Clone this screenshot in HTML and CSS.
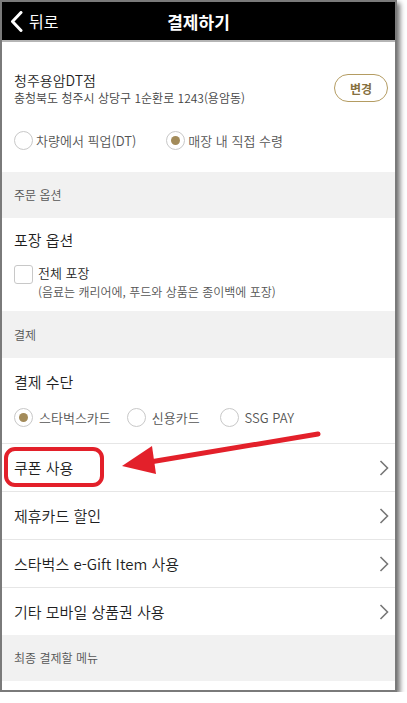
FILE: index.html
```html
<!DOCTYPE html>
<html lang="ko">
<head>
    <meta charset="UTF-8">
    <meta name="viewport" content="width=device-width, initial-scale=1.0">
    <title>결제하기</title>
    <link rel="stylesheet" href="styles.css">
</head>
<body>
<div class="phone">
    <div class="topbar">
        <a class="back" href="#">
            <svg width="13" height="21" viewBox="0 0 13 21"><polyline points="11,1.5 2.5,10.5 11,19.5" fill="none" stroke="#fff" stroke-width="3" stroke-linecap="round" stroke-linejoin="round"/></svg>
            <span>뒤로</span>
        </a>
        <h1>결제하기</h1>
    </div>

    <div class="store">
        <div class="store-row">
            <div>
                <div class="store-name">청주용암DT점</div>
                <div class="store-addr">충청북도 청주시 상당구 1순환로 1243(용암동)</div>
            </div>
            <button class="change-button">변경</button>
        </div>
        <div class="radios">
            <label class="radio first"><span class="circle"></span>차량에서 픽업(DT)</label>
            <label class="radio"><span class="circle on"></span>매장 내 직접 수령</label>
        </div>
    </div>

    <div class="section-title">주문 옵션</div>

    <div class="pack">
        <div class="heading">포장 옵션</div>
        <div class="check-row">
            <span class="box"></span>
            <div>
                <div class="check-label">전체 포장</div>
                <div class="check-sub">(음료는 캐리어에, 푸드와 상품은 종이백에 포장)</div>
            </div>
        </div>
    </div>

    <div class="section-title tall">결제</div>

    <div class="pay">
        <div class="heading">결제 수단</div>
        <div class="radios pay-radios">
            <label class="radio card"><span class="circle on"></span>스타벅스카드</label>
            <label class="radio credit"><span class="circle"></span>신용카드</label>
            <label class="radio"><span class="circle"></span>SSG PAY</label>
        </div>
    </div>

    <div class="list">
        <a class="list-row" href="#"><span>쿠폰 사용</span>
            <svg width="10" height="16" viewBox="0 0 10 16"><polyline points="1.5,1 8.5,8 1.5,15" fill="none" stroke="#777" stroke-width="1.6"/></svg></a>
        <a class="list-row" href="#"><span>제휴카드 할인</span>
            <svg width="10" height="16" viewBox="0 0 10 16"><polyline points="1.5,1 8.5,8 1.5,15" fill="none" stroke="#777" stroke-width="1.6"/></svg></a>
        <a class="list-row" href="#"><span>스타벅스 e-Gift Item 사용</span>
            <svg width="10" height="16" viewBox="0 0 10 16"><polyline points="1.5,1 8.5,8 1.5,15" fill="none" stroke="#777" stroke-width="1.6"/></svg></a>
        <a class="list-row" href="#"><span>기타 모바일 상품권 사용</span>
            <svg width="10" height="16" viewBox="0 0 10 16"><polyline points="1.5,1 8.5,8 1.5,15" fill="none" stroke="#777" stroke-width="1.6"/></svg></a>
    </div>

    <div class="section-title">최종 결제할 메뉴</div>

    <!-- red annotation drawn over the screenshot -->
    <svg class="markup" width="393" height="688" viewBox="0 0 393 688">
        <rect x="4" y="447" width="96" height="36" rx="9" fill="none" stroke="#e3202a" stroke-width="4"/>
        <line x1="316" y1="432" x2="148" y2="460" stroke="#e3202a" stroke-width="5" stroke-linecap="round"/>
        <polygon points="120,464 150,444 154,472" fill="#e3202a"/>
    </svg>
</div>
</body>
</html>
```

FILE: styles.css
```css
body {
    margin: 0;
    padding: 0;
    background-color: #ffffff;
    font-family: "Noto Sans CJK KR", "Noto Sans", sans-serif;
    font-weight: 350;
    color: #1f1f1f;
}
.phone {
    position: relative;
    width: 393px;
    height: 688px;
    border: 2px solid #7a7a7a;
    box-shadow: 3px 3px 5px rgba(0, 0, 0, 0.55);
    overflow: hidden;
    background-color: #ffffff;
}
.topbar {
    height: 38px;
    background-color: #000000;
    border-bottom: 2px solid #b5b5b5;
    display: flex;
    align-items: center;
    position: relative;
}
.back {
    display: flex;
    align-items: center;
    gap: 6px;
    padding-left: 8px;
    color: #ffffff;
    text-decoration: none;
    font-size: 16px;
    font-weight: 400;
}
.topbar h1 {
    position: absolute;
    left: 0;
    right: 0;
    margin: 0;
    text-align: center;
    color: #ffffff;
    font-size: 17px;
    font-weight: bold;
    pointer-events: none;
}
.store {
    padding: 28px 12px 22px;
}
.store-row {
    display: flex;
    justify-content: space-between;
    align-items: center;
}
.store-name {
    font-size: 14px;
    line-height: 20px;
}
.store-addr {
    font-size: 12px;
    line-height: 16px;
    color: #444;
}
.change-button {
    width: 54px;
    height: 28px;
    margin-right: -5px;
    border: 1.5px solid #b49c62;
    border-radius: 14px;
    background-color: #ffffff;
    color: #86703f;
    font-family: inherit;
    font-size: 12px;
    font-weight: bold;
}
.radios {
    display: flex;
    margin-top: 25px;
}
.radio {
    display: flex;
    align-items: center;
    gap: 3px;
    font-size: 13px;
    color: #555;
    height: 19px;
}
.radio.first {
    margin-right: 30px;
}
.circle {
    width: 17px;
    height: 17px;
    border: 1px solid #c8c8c8;
    border-radius: 50%;
    box-sizing: content-box;
    display: flex;
    align-items: center;
    justify-content: center;
}
.circle.on::after {
    content: "";
    width: 9px;
    height: 9px;
    border-radius: 50%;
    background-color: #a38b5a;
}
.section-title {
    height: 46px;
    line-height: 46px;
    padding-left: 12px;
    background-color: #f1f1f1;
    font-size: 12px;
    color: #555;
}
.section-title.tall {
    height: 47px;
    line-height: 47px;
}
.pack {
    padding: 12px 12px 10px;
}
.heading {
    font-size: 15px;
    line-height: 20px;
}
.check-row {
    display: flex;
    gap: 5px;
    margin-top: 14px;
}
.box {
    width: 17px;
    height: 17px;
    margin-top: 1px;
    border: 1px solid #c8c8c8;
    border-radius: 3px;
}
.check-label {
    font-size: 13px;
    line-height: 18px;
}
.check-sub {
    font-size: 12px;
    line-height: 19px;
    color: #555;
}
.pay {
    padding: 14px 12px 16px;
}
.pay-radios {
    margin-top: 16px;
}
.pay-radios .radio {
    gap: 6px;
}
.radio.card {
    margin-right: 16px;
}
.radio.credit {
    margin-right: 20px;
}
.list-row {
    display: flex;
    justify-content: space-between;
    align-items: center;
    height: 47px;
    padding: 0 6px 0 12px;
    border-top: 1px solid #e6e6e6;
    color: #1f1f1f;
    text-decoration: none;
    font-size: 15px;
}
.markup {
    position: absolute;
    left: 0;
    top: 0;
    pointer-events: none;
}
```
